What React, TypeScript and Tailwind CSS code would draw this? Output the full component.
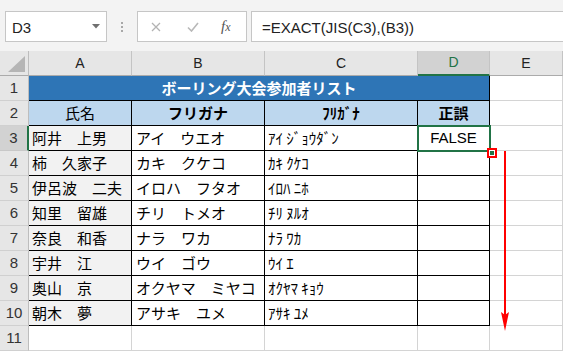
import React from "react";

const JP = "font-['Noto_Sans_CJK_JP','Noto_Sans_CJK_SC',sans-serif]";
const LAT = "font-['Liberation_Sans',Arial,sans-serif]";

const names = ["阿井　上男", "柿　久家子", "伊呂波　二夫", "知里　留雄", "奈良　和香", "宇井　江", "奥山　京", "朝木　夢"];
const kana = ["アイ　ウエオ", "カキ　クケコ", "イロハ　フタオ", "チリ　トメオ", "ナラ　ワカ", "ウイ　ゴウ", "オクヤマ　ミヤコ", "アサキ　ユメ"];
const half = ["ｱｲ ｼﾞｮｳﾀﾞﾝ", "ｶｷ ｸｹｺ", "ｲﾛﾊ ﾆﾎ", "ﾁﾘ ﾇﾙｵ", "ﾅﾗ ﾜｶ", "ｳｲ ｴ", "ｵｸﾔﾏ ｷｮｳ", "ｱｻｷ ﾕﾒ"];

function RowHead({ n, active }: { n: number; active?: boolean }) {
  return (
    <div
      className={
        active
          ? `flex items-center justify-center bg-[#d2d2d2] border-r-2 border-r-[#217346] border-b border-b-[#c8c8c8] text-[15px] text-[#333] ${LAT}`
          : `flex items-center justify-center bg-[#e6e6e6] border-r border-r-[#bdbdbd] border-b border-b-[#d0d0d0] text-[15px] text-[#333] ${LAT}`
      }
    >
      {n}
    </div>
  );
}

function GrayCell() {
  return <div className="bg-white border-r border-b border-[#d4d4d4]" />;
}

export default function App() {
  return (
    <div className="w-[563px] h-[352px] overflow-hidden bg-white">
      {/* toolbar */}
      <div className="h-[51px] bg-[#f3f3f3] flex items-start pt-[11px] pl-[5px]">
        <div className="w-[102px] h-[31px] bg-white border border-[#c6c6c6] flex items-center justify-between pl-[6px] pr-[6px]">
          <span className={`text-[15px] text-[#222] pt-[4px] ${LAT}`}>D3</span>
          <svg width="8" height="5" viewBox="0 0 8 5">
            <polygon points="0,0 8,0 4,4.5" fill="#707070" />
          </svg>
        </div>
        <div className="w-[30px] h-[31px] flex flex-col items-center justify-center gap-[2px]">
          <div className="w-[2px] h-[2px] bg-[#a8a8a8]" />
          <div className="w-[2px] h-[2px] bg-[#a8a8a8]" />
          <div className="w-[2px] h-[2px] bg-[#a8a8a8]" />
        </div>
        <div className="w-[110px] h-[31px] bg-white border border-[#c6c6c6] flex items-center pl-[13px]">
          <svg width="10" height="10" viewBox="0 0 10 10">
            <path d="M1 1 L9 9 M9 1 L1 9" stroke="#b3b3b3" strokeWidth="1.3" fill="none" />
          </svg>
          <svg width="12" height="10" viewBox="0 0 12 10" className="ml-[26px]">
            <path d="M1 5.5 L4.5 9 L11 1" stroke="#b8b8b8" strokeWidth="1.6" fill="none" />
          </svg>
          <span className="ml-[22px] text-[15px] italic text-[#555] font-['Liberation_Serif',serif]">
            f<span className="text-[12px]">x</span>
          </span>
        </div>
        <div className="flex-1 ml-[4px] h-[31px] bg-white border border-r-0 border-[#c6c6c6] flex items-center pl-[10px]">
          <span className={`text-[15px] text-[#222] pt-[4px] ${LAT}`}>=EXACT(JIS(C3),(B3))</span>
        </div>
      </div>

      {/* sheet */}
      <div className="relative">
        <div className="grid grid-cols-[29px_103px_133px_153px_72px_73px] auto-rows-[25px]">
          {/* column headers */}
          <div className="bg-[#e6e6e6] border-r border-r-[#bdbdbd] border-b border-b-[#ababab] flex items-end justify-end pr-[3px] pb-[3px]">
            <svg width="17" height="16" viewBox="0 0 17 16">
              <polygon points="17,0 17,16 0,16" fill="#b5b5b5" />
            </svg>
          </div>
          {["A", "B", "C"].map((c) => (
            <div
              key={c}
              className={`bg-[#e6e6e6] border-r border-r-[#c4c4c4] border-b border-b-[#ababab] flex items-center justify-center text-[14px] text-[#222] ${LAT}`}
            >
              {c}
            </div>
          ))}
          <div className={`bg-[#d2d2d2] border-r border-r-[#c4c4c4] border-b-2 border-b-[#217346] flex items-center justify-center text-[14px] text-[#217346] ${LAT}`}>
            D
          </div>
          <div className={`bg-[#e6e6e6] border-r border-r-[#c4c4c4] border-b border-b-[#ababab] flex items-center justify-center text-[14px] text-[#222] ${LAT}`}>
            E
          </div>

          {/* row 1 */}
          <RowHead n={1} />
          <div className={`col-span-4 bg-[#2e75b6] border-r border-b border-black flex items-center justify-center text-white font-bold text-[15px] ${JP}`}>
            ボーリング大会参加者リスト
          </div>
          <GrayCell />

          {/* row 2 */}
          <RowHead n={2} />
          <div className={`bg-[#bdd7ee] border-r border-b border-black flex items-center justify-center text-[15px] text-black ${JP}`}>氏名</div>
          <div className={`bg-[#bdd7ee] border-r border-b border-black flex items-center justify-center text-[15px] font-bold text-black ${JP}`}>フリガナ</div>
          <div className={`bg-[#bdd7ee] border-r border-b border-black flex items-center justify-center text-[15px] font-bold text-black ${JP}`}>ﾌﾘｶﾞﾅ</div>
          <div className={`bg-[#bdd7ee] border-r border-b border-black flex items-center justify-center text-[15px] font-bold text-black ${JP}`}>正誤</div>
          <GrayCell />

          {/* rows 3-10 */}
          {names.map((nm, i) => (
            <React.Fragment key={i}>
              <RowHead n={i + 3} active={i === 0} />
              <div className={`bg-[#f2f2f2] border-r border-b border-black flex items-center pl-[3px] text-[15px] text-black whitespace-pre ${JP}`}>{nm}</div>
              <div className={`bg-white border-r border-b border-black flex items-center pl-[4px] text-[15px] text-black whitespace-pre ${JP}`}>{kana[i]}</div>
              <div className={`bg-white border-r border-b border-black flex items-center pl-[3px] text-[15px] text-black whitespace-pre ${JP}`}>{half[i]}</div>
              <div className={`bg-white border-r border-b border-black flex items-center justify-center text-[15px] text-black ${LAT}`}>
                {i === 0 ? "FALSE" : ""}
              </div>
              <GrayCell />
            </React.Fragment>
          ))}

          {/* row 11 */}
          <RowHead n={11} />
          <GrayCell />
          <GrayCell />
          <GrayCell />
          <GrayCell />
          <GrayCell />
        </div>

        {/* selection box on D3 */}
        <div className="absolute left-[417px] top-[74px] w-[74px] h-[27px] border-2 border-[#217346]" />
        {/* fill handle */}
        <div className="absolute left-[487px] top-[97px] w-[10px] h-[10px] border-2 border-[#ff0000] bg-white p-[1px]">
          <div className="w-full h-full bg-[#217346]" />
        </div>
        {/* red arrow */}
        <svg className="absolute left-[499px] top-[100px]" width="12" height="182" viewBox="0 0 12 182">
          <line x1="6" y1="0" x2="6" y2="166" stroke="#ff0000" strokeWidth="2" />
          <polygon points="2,161 6,164 10,161 6,180" fill="#ff0000" />
        </svg>
      </div>
    </div>
  );
}
